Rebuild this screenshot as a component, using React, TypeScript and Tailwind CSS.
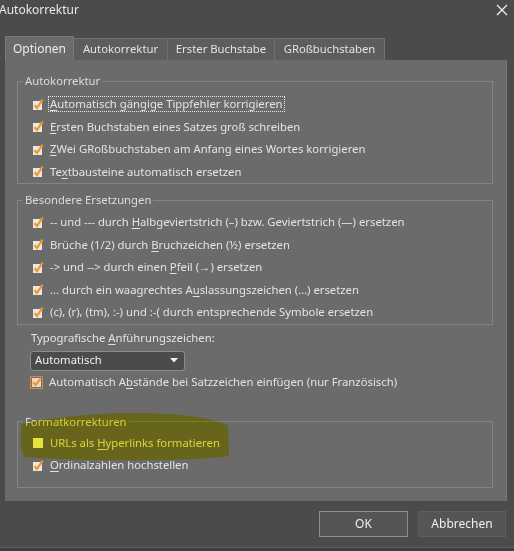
import React from "react";

const U = ({ children }: { children: React.ReactNode }) => (
  <span className="underline decoration-1 underline-offset-[2px]">{children}</span>
);

function Check({ kind = "on" }: { kind?: "on" | "off" | "boxed" }) {
  if (kind === "off") {
    return (
      <svg width="13" height="13" viewBox="0 0 13 13" className="shrink-0">
        <rect x="1" y="2" width="10" height="10" fill="#f2f2f2" />
      </svg>
    );
  }
  if (kind === "boxed") {
    return (
      <svg width="14" height="14" viewBox="0 0 14 14" className="shrink-0">
        <rect x="0.5" y="0.5" width="12" height="12" fill="#6f6f6f" stroke="#d9883a" />
        <rect x="2" y="2" width="9" height="9" fill="#ead6bd" />
        <path d="M3.2 6.4 L5.6 9 L10.3 3.2" fill="none" stroke="#f0932b" strokeWidth="2" />
      </svg>
    );
  }
  return (
    <svg width="13" height="13" viewBox="0 0 13 13" className="shrink-0">
      <rect x="1" y="3" width="9" height="9" fill="#eee7de" />
      <path d="M2.6 7.2 L5 10 L10.6 1.6" fill="none" stroke="#f2952b" strokeWidth="2.2" />
    </svg>
  );
}

function Row({
  children,
  kind = "on",
  focus = false,
}: {
  children: React.ReactNode;
  kind?: "on" | "off" | "boxed";
  focus?: boolean;
}) {
  return (
    <div className="flex h-[22.5px] items-center pl-[14px]">
      <div className="w-[17px]">
        <Check kind={kind} />
      </div>
      <span
        className={
          "leading-[14px] px-[1px] " +
          (focus ? "outline outline-1 outline-dotted outline-[#e6e6e6]" : "")
        }
      >
        {children}
      </span>
    </div>
  );
}

function Group({
  title,
  children,
  className = "",
}: {
  title: string;
  children: React.ReactNode;
  className?: string;
}) {
  return (
    <fieldset className={"border border-[#848484] " + className}>
      <legend className="ml-[5px] px-[2px] leading-4 text-[#dcdcdc]">{title}</legend>
      {children}
    </fieldset>
  );
}

export default function App() {
  return (
    <div className="relative w-[514px] h-[551px] overflow-hidden bg-[#4b4b4b] text-[11.3px] text-[#e3e3e3] font-['Noto_Sans',sans-serif] flex flex-col">
      {/* Title bar */}
      <div className="flex h-[20px] items-center justify-between pr-[6px]">
        <span className="-ml-[1px] text-[12px] text-[#e8e8e8]">Autokorrektur</span>
        <svg width="12" height="12" viewBox="0 0 12 12">
          <path d="M1 1 L11 11 M11 1 L1 11" stroke="#f0f0f0" strokeWidth="1.3" />
        </svg>
      </div>

      {/* Tabs */}
      <div className="mt-[16px] flex h-[24px] items-end px-[5px]">
        <div className="flex h-[24px] w-[69px] items-center justify-center bg-[#6b6b6b] text-[12px] text-[#ececec] border-t border-l border-r border-[#7a7a7a]">
          Optionen
        </div>
        <div className="flex h-[22px] w-[94px] items-center justify-center bg-[#5d5d5d] border-t border-r border-[#707070]">
          Autokorrektur
        </div>
        <div className="flex h-[22px] w-[107px] items-center justify-center bg-[#5d5d5d] border-t border-r border-[#707070]">
          Erster Buchstabe
        </div>
        <div className="flex h-[22px] w-[110px] items-center justify-center bg-[#5d5d5d] border-t border-r border-[#707070]">
          GRoßbuchstaben
        </div>
      </div>

      {/* Panel */}
      <div className="relative mx-[5px] w-[502px] h-[441px] bg-[#6b6b6b] border-r border-[#7a7a7a] pl-[12px] pr-[13px] pt-[13px] pb-[13px] flex flex-col">
        <Group title="Autokorrektur" className="pt-[4px]">
          <Row focus>
            <U>A</U>utomatisch gängige Tippfehler korrigieren
          </Row>
          <Row>
            <U>E</U>rsten Buchstaben eines Satzes groß schreiben
          </Row>
          <Row>
            <U>Z</U>Wei GRoßbuchstaben am Anfang eines Wortes korrigieren
          </Row>
          <Row>
            Te<U>x</U>tbausteine automatisch ersetzen
          </Row>
        </Group>

        <Group title="Besondere Ersetzungen" className="mt-[8px] pt-[3px]">
          <Row>
            -- und --- durch <U>H</U>albgeviertstrich (–) bzw. Geviertstrich (—) ersetzen
          </Row>
          <Row>
            Brüche (1/2) durch <U>B</U>ruchzeichen (½) ersetzen
          </Row>
          <Row>
            -&gt; und --&gt; durch einen <U>P</U>feil (→) ersetzen
          </Row>
          <Row>
            ... durch ein waagrechtes A<U>u</U>slassungszeichen (…) ersetzen
          </Row>
          <Row>(c), (r), (tm), :-) und :-( durch entsprechende Symbole ersetzen</Row>
        </Group>

        <div className="mt-[5px] ml-[14px] leading-4">
          Typografische <U>A</U>nführungszeichen:
        </div>
        <div className="mt-[5px] ml-[13px] flex h-[20px] w-[155px] items-center justify-between rounded-[3px] border border-[#8c8c8c] bg-[#4b4b4b] pl-[4px] pr-[6px] text-[#f0f0f0]">
          <span>Automatisch</span>
          <svg width="8" height="5" viewBox="0 0 8 5">
            <path d="M0 0 L8 0 L4 4.5 Z" fill="#f0f0f0" />
          </svg>
        </div>
        <div className="mt-[1px] flex h-[22px] items-center pl-[13px]">
          <div className="w-[19px]">
            <Check kind="boxed" />
          </div>
          <span>
            Automatisch A<U>b</U>stände bei Satzzeichen einfügen (nur Französisch)
          </span>
        </div>

        <Group title="Formatkorrekturen" className="mt-[20px] pt-[2px] pb-[10px]">
          <Row kind="off">
            URLs als <U>H</U>yperlinks formatieren
          </Row>
          <Row>
            <U>O</U>rdinalzahlen hochstellen
          </Row>
        </Group>

        {/* highlighter stroke */}
        <svg
          className="pointer-events-none absolute left-[12px] top-[350px] mix-blend-multiply"
          width="220"
          height="56"
          viewBox="0 0 220 56"
        >
          <path
            d="M5 14 C 25 8, 85 2, 125 3 C 165 4, 200 8, 211 16 L 212 46 C 185 51, 65 52, 7 47 C 3 40, 3 20, 5 14 Z"
            fill="#f2f040"
          />
        </svg>
      </div>

      {/* Buttons */}
      <div className="mt-[10px] flex justify-end gap-[10px] pr-[8px]">
        <div className="flex h-[26px] w-[89px] items-center justify-center border border-[#8d8d8d] bg-[#555555] text-[12px] text-[#f0f0f0]">
          OK
        </div>
        <div className="flex h-[26px] w-[88px] items-center justify-center border border-[#5f5f5f] bg-[#555555] text-[12px] text-[#f0f0f0]">
          Abbrechen
        </div>
      </div>
      <div className="mt-auto h-[4px] border-t border-[#5e5e5e] bg-[#3f3f3f]" />
    </div>
  );
}
